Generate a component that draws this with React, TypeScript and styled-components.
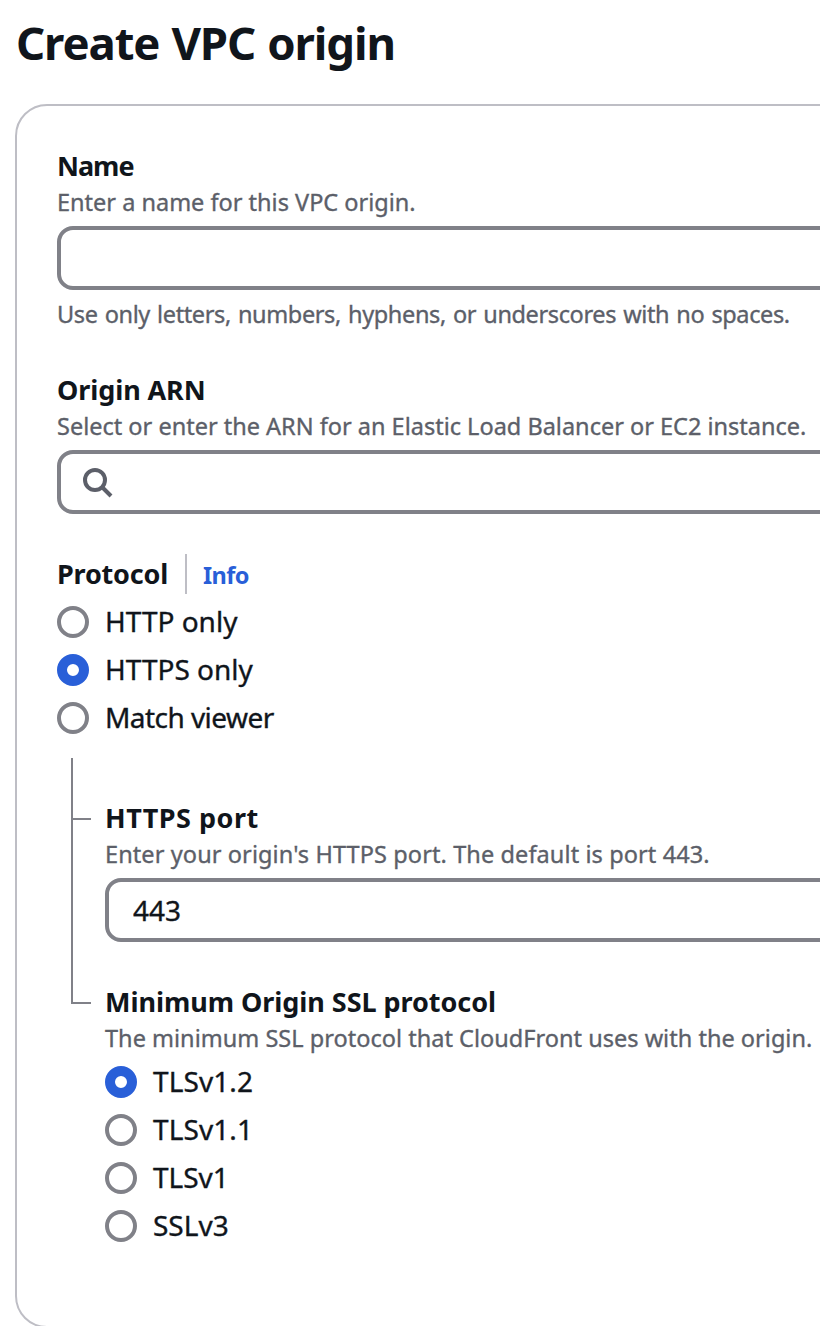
import React, { useState } from "react";
import styled, { createGlobalStyle } from "styled-components";

const ink = "#10151b";
const muted = "#5c5f69";
const control = "#808188";
const accent = "#295fd8";

const GlobalStyle = createGlobalStyle`
  *, *::before, *::after { box-sizing: border-box; }
  body { margin: 0; background: #fff; }
`;

const Page = styled.main`
  height: 1326px;
  overflow: hidden;
  padding: 14px 0 0 15px;
  background: #fff;
  color: ${ink};
  font-family: "Noto Sans", "Open Sans", sans-serif;
`;

const Title = styled.h1`
  margin: 0 0 34px 1px;
  height: 56px;
  font-size: 45.5px;
  line-height: 56px;
  font-weight: 700;
  letter-spacing: -1.1px;
  word-spacing: 1.3px;
`;

const Panel = styled.section`
  width: 1200px;
  height: 1224px;
  padding: 40px 40px 80px;
  border: 2px solid #bebec5;
  border-radius: 32px;
  display: flex;
  flex-direction: column;
  gap: 40px;
`;

const Field = styled.div`
  display: flex;
  flex-direction: column;
`;

const LabelRow = styled.div`
  display: flex;
  align-items: center;
  height: 40px;
`;

const Label = styled.label<{ $track?: number }>`
  font-size: 27px;
  line-height: 40px;
  font-weight: 700;
  white-space: nowrap;
  letter-spacing: ${(p) => p.$track ?? 0}px;
`;

const Divider = styled.span`
  width: 2px;
  height: 40px;
  margin: 0 16px 0 17px;
  background: #bebec5;
`;

const InfoLink = styled.a`
  color: ${accent};
  font-size: 23.5px;
  line-height: 36px;
  padding-top: 2px;
  font-weight: 700;
  letter-spacing: -0.6px;
  text-decoration: none;
`;

const Description = styled.div<{ $track?: number; $word?: number }>`
  color: ${muted};
  font-size: 23.5px;
  line-height: 32px;
  white-space: nowrap;
  letter-spacing: ${(p) => p.$track ?? 0}px;
  word-spacing: ${(p) => p.$word ?? 0}px;
  -webkit-text-stroke: 0.35px ${muted};
`;

const Hint = styled(Description)`
  margin-top: 8px;
`;

const InputBox = styled.div`
  display: flex;
  align-items: center;
  height: 64px;
  margin-top: 8px;
  padding: 0 20px;
  border: 4px solid ${control};
  border-radius: 16px;

  svg { flex: none; }
`;

const TextInput = styled.input`
  flex: 1;
  min-width: 0;
  height: 48px;
  padding: 0 4px;
  border: 0;
  outline: 0;
  background: transparent;
  color: ${ink};
  font-family: inherit;
  font-size: 28px;
  -webkit-text-stroke: 0.35px ${ink};
`;

const RadioList = styled.div`
  display: flex;
  flex-direction: column;
  gap: 8px;
  margin-top: 8px;
`;

const RadioRow = styled.div`
  display: flex;
  align-items: center;
  gap: 16px;
  height: 40px;
  cursor: pointer;
`;

const RadioDot = styled.span<{ $on: boolean }>`
  width: 32px;
  height: 32px;
  border-radius: 50%;
  background: #fff;
  border: ${(p) => (p.$on ? `10px solid ${accent}` : `4px solid ${control}`)};
`;

const RadioText = styled.span<{ $track?: number }>`
  font-size: 28px;
  line-height: 38px;
  padding-bottom: 2px;
  white-space: nowrap;
  letter-spacing: ${(p) => p.$track ?? 0}px;
  -webkit-text-stroke: 0.35px ${ink};
`;

const Tree = styled.div`
  display: flex;
  flex-direction: column;
  margin-top: 20px;
`;

const Branch = styled.div`
  display: grid;
  grid-template-columns: 14px 34px 1fr;
`;

const Rail = styled.div<{ $last?: boolean }>`
  grid-column: 2;
  display: flex;
  flex-direction: column;

  &::before {
    content: "";
    width: 20px;
    height: 62px;
    border-left: 2px solid ${control};
    border-bottom: 2px solid ${control};
  }
  &::after {
    content: "";
    flex: 1;
    width: 2px;
    background: ${(p) => (p.$last ? "transparent" : control)};
  }
`;

const BranchBody = styled(Field)`
  grid-column: 3;
  padding-top: 40px;
`;

const SearchIcon = () => (
  <svg width="32" height="32" viewBox="0 0 16 16" fill="none" stroke={muted} strokeWidth="2">
    <circle cx="7" cy="7" r="5" />
    <path d="m15 15-4.5-4.5" />
  </svg>
);

type Option = { text: string; track?: number };

function Radios({ options, initial }: { options: Option[]; initial: string }) {
  const [value, setValue] = useState(initial);
  return (
    <>
      {options.map((o) => (
        <RadioRow key={o.text} role="radio" aria-checked={o.text === value} onClick={() => setValue(o.text)}>
          <RadioDot $on={o.text === value} />
          <RadioText $track={o.track}>{o.text}</RadioText>
        </RadioRow>
      ))}
    </>
  );
}

const protocols: Option[] = [
  { text: "HTTP only" },
  { text: "HTTPS only" },
  { text: "Match viewer", track: -0.55 },
];

const tlsVersions: Option[] = [
  { text: "TLSv1.2", track: 0.1 },
  { text: "TLSv1.1", track: 0.1 },
  { text: "TLSv1" },
  { text: "SSLv3" },
];

export default function App() {
  return (
    <Page>
      <GlobalStyle />
      <Title>Create VPC origin</Title>
      <Panel>
        <Field>
          <Label $track={-1}>Name</Label>
          <Description>Enter a name for this VPC origin.</Description>
          <InputBox>
            <TextInput />
          </InputBox>
          <Hint $track={-0.38} $word={1.4}>
            Use only letters, numbers, hyphens, or underscores with no spaces.
          </Hint>
        </Field>

        <Field>
          <Label $track={-0.1}>Origin ARN</Label>
          <Description>Select or enter the ARN for an Elastic Load Balancer or EC2 instance.</Description>
          <InputBox>
            <SearchIcon />
            <TextInput />
          </InputBox>
        </Field>

        <Field>
          <LabelRow>
            <Label $track={-0.2}>Protocol</Label>
            <Divider />
            <InfoLink>Info</InfoLink>
          </LabelRow>
          <RadioList>
            <Radios options={protocols} initial="HTTPS only" />
          </RadioList>
          <Tree>
            <Branch>
              <Rail />
              <BranchBody>
                <Label $track={0.5}>HTTPS port</Label>
                <Description $track={0.1}>Enter your origin's HTTPS port. The default is port 443.</Description>
                <InputBox>
                  <TextInput defaultValue="443" />
                </InputBox>
              </BranchBody>
            </Branch>
            <Branch>
              <Rail $last />
              <BranchBody>
                <Label $track={-0.05}>Minimum Origin SSL protocol</Label>
                <Description $track={0.02}>The minimum SSL protocol that CloudFront uses with the origin.</Description>
                <RadioList>
                  <Radios options={tlsVersions} initial="TLSv1.2" />
                </RadioList>
              </BranchBody>
            </Branch>
          </Tree>
        </Field>
      </Panel>
    </Page>
  );
}
